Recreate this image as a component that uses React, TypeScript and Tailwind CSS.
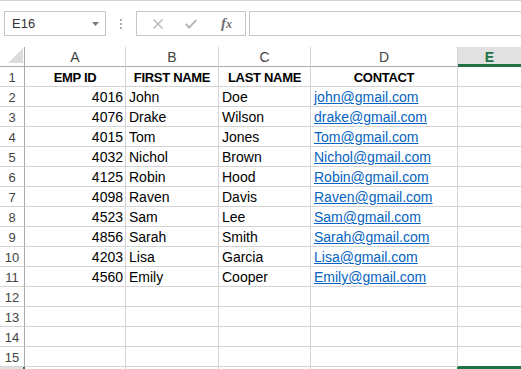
import React from "react";

const rows: [string, string, string, string][] = [
  ["4016", "John", "Doe", "john@gmail.com"],
  ["4076", "Drake", "Wilson", "drake@gmail.com"],
  ["4015", "Tom", "Jones", "Tom@gmail.com"],
  ["4032", "Nichol", "Brown", "Nichol@gmail.com"],
  ["4125", "Robin", "Hood", "Robin@gmail.com"],
  ["4098", "Raven", "Davis", "Raven@gmail.com"],
  ["4523", "Sam", "Lee", "Sam@gmail.com"],
  ["4856", "Sarah", "Smith", "Sarah@gmail.com"],
  ["4203", "Lisa", "Garcia", "Lisa@gmail.com"],
  ["4560", "Emily", "Cooper", "Emily@gmail.com"],
];

const cell =
  "h-5 border-r border-b border-[#d4d4d4] pt-[2px] leading-[17px] text-[14px] px-[3px] overflow-hidden whitespace-nowrap text-black";
const boldHead =
  "h-5 border-r border-b border-[#d4d4d4] pt-[2px] leading-[17px] text-[13px] tracking-[-0.3px] font-bold text-center overflow-hidden whitespace-nowrap text-black";
const rowHead =
  "h-5 border-r border-r-[#ababab] border-b border-b-[#d4d4d4] pt-[2px] leading-[17px] text-[13px] text-center text-[#444]";
const colHead =
  "h-5 border-r border-r-[#d4d4d4] border-b border-b-[#ababab] pt-[2px] leading-[17px] text-[14px] text-center text-[#444]";

export default function App() {
  return (
    <div className="w-[521px] h-[369px] overflow-hidden bg-white font-['Liberation_Sans',Arial,sans-serif]">
      <div className="h-px bg-[#d4d4d4]" />
      {/* formula bar */}
      <div className="h-[46px] flex items-start pt-[10px]">
        <div className="ml-[4px] w-[102px] h-[25px] border border-[#c6c6c6] flex items-center pl-[7px] text-[13px] text-[#333] shrink-0">
          <span>E16</span>
          <svg className="ml-auto mr-[6px]" width="7" height="4" viewBox="0 0 7 4">
            <polygon points="0,0 7,0 3.5,4" fill="#777" />
          </svg>
        </div>
        <div className="ml-[14px] mt-[8px] flex flex-col gap-[2px] shrink-0">
          <div className="w-[2px] h-[2px] bg-[#b0b0b0]" />
          <div className="w-[2px] h-[2px] bg-[#b0b0b0]" />
          <div className="w-[2px] h-[2px] bg-[#b0b0b0]" />
        </div>
        <div className="ml-[14px] w-[110px] h-[25px] border border-[#c6c6c6] flex items-center shrink-0">
          <svg className="ml-[16px]" width="10" height="10" viewBox="0 0 10 10">
            <path d="M0.5 0.5 L9.5 9.5 M9.5 0.5 L0.5 9.5" stroke="#b4b4b4" strokeWidth="1.3" />
          </svg>
          <svg className="ml-[22px]" width="12" height="10" viewBox="0 0 12 10">
            <path d="M0.8 5 L4.3 8.6 L11.3 0.8" stroke="#b4b4b4" strokeWidth="1.8" fill="none" />
          </svg>
          <span className="ml-[24px] text-[15px] italic font-bold text-[#6f6f6f] font-['Liberation_Serif',serif] leading-none">
            f<span className="text-[12px]">x</span>
          </span>
        </div>
        <div className="ml-[3px] flex-1 h-[25px] border border-[#c6c6c6] mr-[-10px]" />
      </div>
      {/* sheet grid */}
      <div className="grid grid-cols-[25px_101px_93px_92px_147px_1fr]">
        <div className="h-5 border-r border-r-[#ababab] border-b border-b-[#ababab] relative">
          <svg className="absolute left-[8px] top-[1px]" width="16" height="16" viewBox="0 0 16 16">
            <polygon points="15,0 15,15 0,15" fill="#dcdcdc" />
          </svg>
        </div>
        <div className={colHead}>A</div>
        <div className={colHead}>B</div>
        <div className={colHead}>C</div>
        <div className={colHead}>D</div>
        <div className="h-5 border-b-[3px] border-b-[#217346] bg-[#e1e1e1] pt-[2px] leading-[17px] text-[14px] text-center text-[#217346] font-bold">
          E
        </div>

        <div className={rowHead}>1</div>
        <div className={boldHead}>EMP ID</div>
        <div className={boldHead}>FIRST NAME</div>
        <div className={boldHead}>LAST NAME</div>
        <div className={boldHead}>CONTACT</div>
        <div className="h-5 border-b border-[#d4d4d4]" />

        {rows.map((r, i) => (
          <React.Fragment key={i}>
            <div className={rowHead}>{i + 2}</div>
            <div className={cell + " text-right pr-[2px]"}>{r[0]}</div>
            <div className={cell}>{r[1]}</div>
            <div className={cell}>{r[2]}</div>
            <div className={cell}>
              <span className="text-[#0563c1] underline">{r[3]}</span>
            </div>
            <div className="h-5 border-b border-[#d4d4d4]" />
          </React.Fragment>
        ))}

        {[12, 13, 14, 15].map((n) => (
          <React.Fragment key={n}>
            <div className={rowHead}>{n}</div>
            <div className={cell} />
            <div className={cell} />
            <div className={cell} />
            <div className={cell} />
            <div
              className={
                n === 15
                  ? "h-5 border-b border-[#217346]"
                  : "h-5 border-b border-[#d4d4d4]"
              }
            />
          </React.Fragment>
        ))}

        <div className="h-5 bg-[#e1e1e1] border-r-2 border-r-[#217346]" />
        <div className={cell} />
        <div className={cell} />
        <div className={cell} />
        <div className="h-5 border-r border-r-[#217346] border-b border-b-[#d4d4d4]" />
        <div className="h-5 border-t-2 border-[#217346]" />
      </div>
    </div>
  );
}
